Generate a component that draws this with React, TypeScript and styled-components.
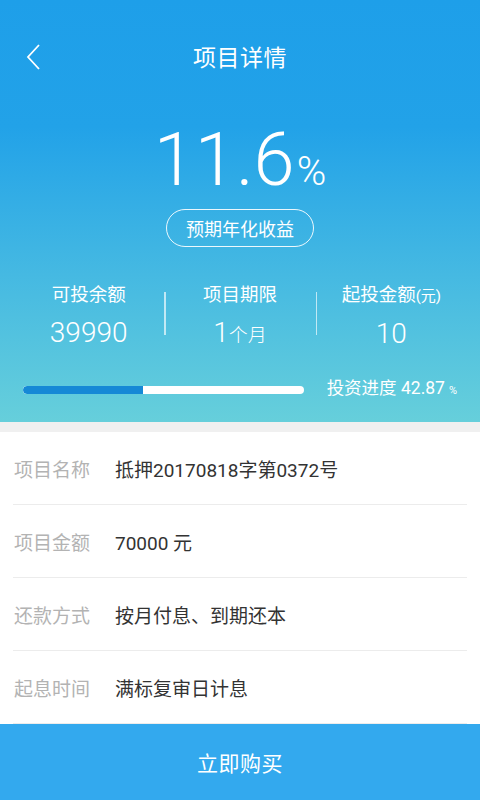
import styled, { createGlobalStyle } from "styled-components";

const GlobalStyle = createGlobalStyle`
  html, body {
    margin: 0;
    padding: 0;
    background: #ffffff;
  }
  body {
    font-family: Roboto, "Noto Sans CJK SC", sans-serif;
  }
`;

const Page = styled.div`
  width: 480px;
  height: 800px;
  display: flex;
  flex-direction: column;
  background: #ffffff;
  overflow: hidden;
`;

const Hero = styled.div`
  height: 422px;
  display: flex;
  flex-direction: column;
  align-items: center;
  color: #ffffff;
  background: linear-gradient(180deg, #1e9fe9 0%, #22a2e8 30%, #45b9e2 65%, #66cfdb 100%);
`;

const NavBar = styled.div`
  position: relative;
  width: 100%;
  height: 116px;
  display: flex;
  align-items: center;
  justify-content: center;
`;

const BackButton = styled.div`
  position: absolute;
  left: 25px;
  top: 43px;
  width: 18px;
  height: 28px;
  display: flex;
`;

const Title = styled.div`
  font-size: 23px;
  line-height: 30px;
  letter-spacing: 0.5px;
  margin-top: 2px;
`;

const Rate = styled.div`
  margin-top: 7px;
  display: flex;
  align-items: baseline;
  font-weight: 300;
  line-height: 1;
`;

const RateNumber = styled.span`
  font-size: 74px;
`;

const RateUnit = styled.span`
  font-size: 40px;
  margin-left: 2px;
`;

const RatePill = styled.div`
  margin-top: 12px;
  height: 36px;
  padding: 0 19px;
  border: 1.5px solid rgba(255, 255, 255, 0.9);
  border-radius: 20px;
  display: flex;
  align-items: center;
  font-size: 18px;
`;

const StatsRow = styled.div`
  width: 100%;
  box-sizing: border-box;
  padding: 0 13px;
  margin-top: 35px;
  display: grid;
  grid-template-columns: repeat(3, 1fr);
`;

const StatCell = styled.div<{ divider?: boolean }>`
  display: flex;
  flex-direction: column;
  align-items: center;
  position: relative;
  &::before {
    content: "";
    display: ${({ divider }) => (divider ? "block" : "none")};
    position: absolute;
    left: 0;
    top: 10px;
    height: 43px;
    width: 1.5px;
    background: rgba(255, 255, 255, 0.65);
  }
`;

const StatLabel = styled.div`
  font-size: 18.5px;
  line-height: 26px;
`;

const StatLabelSmall = styled.span`
  font-size: 15px;
`;

const StatValue = styled.div`
  margin-top: 9px;
  font-size: 28px;
  line-height: 32px;
  font-weight: 300;
`;

const StatValueUnit = styled.span`
  font-size: 19px;
`;

const ProgressRow = styled.div`
  width: 100%;
  box-sizing: border-box;
  margin-top: 24px;
  padding: 0 23px;
  display: flex;
  align-items: center;
`;

const ProgressTrack = styled.div`
  width: 281px;
  height: 8px;
  border-radius: 4px;
  background: #ffffff;
  overflow: hidden;
`;

const ProgressFill = styled.div`
  height: 100%;
  background: #1589d6;
  border-radius: 4px 0 0 4px;
`;

const ProgressText = styled.div`
  margin-left: 23px;
  font-size: 17.5px;
  line-height: 24px;
  white-space: nowrap;
`;

const ProgressUnit = styled.span`
  font-size: 11px;
  margin-left: 4px;
`;

const Gap = styled.div`
  height: 10px;
  background: #f0f0f0;
`;

const DetailList = styled.div`
  flex: 1;
  display: flex;
  flex-direction: column;
  padding: 0 13px;
`;

const DetailRow = styled.div`
  height: 72px;
  border-bottom: 1px solid #ececec;
  display: flex;
  align-items: center;
  font-size: 19px;
`;

const DetailLabel = styled.div`
  width: 101px;
  padding-left: 1px;
  color: #b3b3b3;
`;

const DetailValue = styled.div`
  color: #333333;
`;

const BuyButton = styled.div`
  height: 76px;
  background: #33a9ee;
  color: #ffffff;
  display: flex;
  align-items: center;
  justify-content: center;
  font-size: 21px;
  letter-spacing: 0.5px;
`;

const details = [
  { label: "项目名称", value: "抵押20170818字第0372号" },
  { label: "项目金额", value: "70000 元" },
  { label: "还款方式", value: "按月付息、到期还本" },
  { label: "起息时间", value: "满标复审日计息" },
];

const progress = 42.87;

export default function App() {
  return (
    <Page>
      <GlobalStyle />
      <Hero>
        <NavBar>
          <BackButton>
            <svg width="18" height="28" viewBox="0 0 18 28">
              <polyline
                points="14,2 3,14 14,26"
                fill="none"
                stroke="#ffffff"
                strokeWidth="1.8"
              />
            </svg>
          </BackButton>
          <Title>项目详情</Title>
        </NavBar>
        <Rate>
          <RateNumber>11.6</RateNumber>
          <RateUnit>%</RateUnit>
        </Rate>
        <RatePill>预期年化收益</RatePill>
        <StatsRow>
          <StatCell>
            <StatLabel>可投余额</StatLabel>
            <StatValue>39990</StatValue>
          </StatCell>
          <StatCell divider>
            <StatLabel>项目期限</StatLabel>
            <StatValue>
              1<StatValueUnit>个月</StatValueUnit>
            </StatValue>
          </StatCell>
          <StatCell divider>
            <StatLabel>
              起投金额<StatLabelSmall>(元)</StatLabelSmall>
            </StatLabel>
            <StatValue>10</StatValue>
          </StatCell>
        </StatsRow>
        <ProgressRow>
          <ProgressTrack>
            <ProgressFill style={{ width: `${progress}%` }} />
          </ProgressTrack>
          <ProgressText>
            投资进度 {progress}
            <ProgressUnit>%</ProgressUnit>
          </ProgressText>
        </ProgressRow>
      </Hero>
      <Gap />
      <DetailList>
        {details.map((d) => (
          <DetailRow key={d.label}>
            <DetailLabel>{d.label}</DetailLabel>
            <DetailValue>{d.value}</DetailValue>
          </DetailRow>
        ))}
      </DetailList>
      <BuyButton>立即购买</BuyButton>
    </Page>
  );
}
